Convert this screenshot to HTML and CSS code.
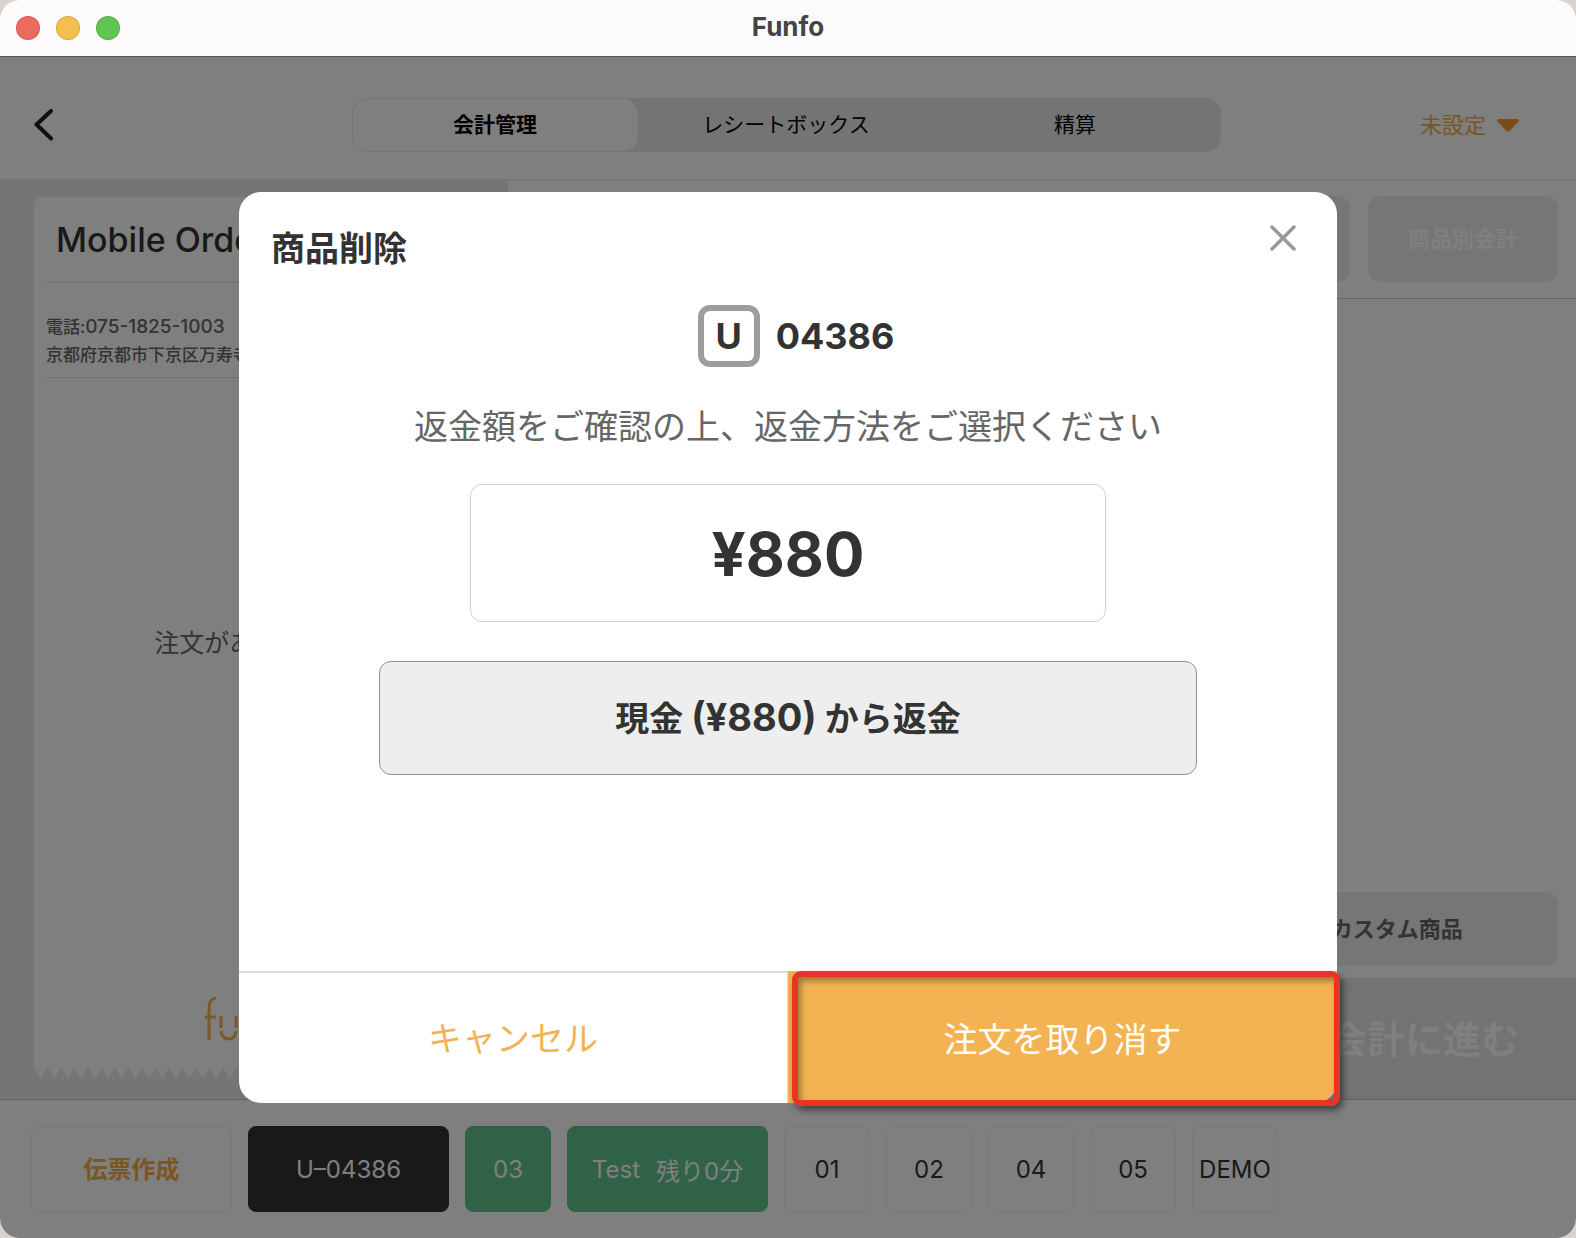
FILE: index.html
```html
<!DOCTYPE html>
<html lang="ja">
<head>
    <meta charset="UTF-8">
    <meta name="viewport" content="width=device-width, initial-scale=1.0">
    <title>Funfo</title>
    <link rel="stylesheet" href="styles.css">
</head>
<body>
    <div class="window">
        <div class="titlebar">
            <div class="lights">
                <span class="light red"></span>
                <span class="light yellow"></span>
                <span class="light green"></span>
            </div>
            <div class="window-title">Funfo</div>
        </div>

        <div class="app">
            <header class="header">
                <button type="button" class="back" aria-label="戻る">
                    <svg width="20" height="32" viewBox="0 0 20 32"><path d="M17 2 L2.500 15.500 L17 29.500" fill="none" stroke="#1c1c28" stroke-width="4" stroke-linecap="round" stroke-linejoin="round"/></svg>
                </button>
                <nav class="tabs">
                    <button type="button" class="tab active">会計管理</button>
                    <button type="button" class="tab">レシートボックス</button>
                    <button type="button" class="tab">精算</button>
                </nav>
                <label class="staff">
                    <select class="staff-select" aria-label="担当者">
                        <option>未設定</option>
                    </select>
                    <svg width="22" height="13" viewBox="0 0 22 13"><path d="M2 0 H20 Q23 .5 21 3 L13 11.500 Q11 13.500 9 11.500 L1 3 Q-1 .5 2 0 Z" fill="#f39a2b"/></svg>
                </label>
            </header>

            <main class="main">
                <section class="receipt-panel">
                    <div class="receipt">
                        <h1 class="shop-name">Mobile Order</h1>
                        <div class="shop-info">
                            <p>電話:<span class="phone">075-1825-1003</span></p>
                            <p>京都府京都市下京区万寿寺町</p>
                        </div>
                        <p class="empty">注文がありません</p>
                        <svg class="logo" width="98" height="46" viewBox="0 0 98 46" fill="none" stroke="#f4b252" stroke-width="3">
                            <path d="M4 44 V12 Q4 3 11 2 M0 21 H11"/>
                            <path d="M16 20 V32 M31 20 V32 M16 35 Q17 43 24 43 Q30 43 31 35"/>
                            <path d="M38 44 V32 M53 44 V32 M38 29 Q39 21 45 21 Q52 21 53 29"/>
                            <path d="M63 44 V12 Q63 3 70 2 M59 21 H70"/>
                            <circle cx="85" cy="32" r="11"/>
                        </svg>
                    </div>
                    <svg class="receipt-edge" width="100%" height="12">
                        <defs>
                            <pattern id="teeth" width="13.500" height="12" patternUnits="userSpaceOnUse">
                                <path d="M0 0 H13.500 L6.750 12 Z" fill="#fff"/>
                            </pattern>
                        </defs>
                        <rect width="100%" height="12" fill="url(#teeth)"/>
                    </svg>
                </section>

                <section class="order-panel">
                    <div class="split-row">
                        <button type="button" class="split">分割会計</button>
                        <button type="button" class="split">商品別会計</button>
                    </div>
                    <div class="order-list"></div>
                    <div class="tools">
                        <button type="button" class="tool">割引</button>
                        <button type="button" class="tool">割増</button>
                        <button type="button" class="tool">カスタム商品</button>
                    </div>
                    <div class="checkout-bar">
                        <button type="button" class="checkout">会計に進む</button>
                    </div>
                </section>
            </main>

            <footer class="slips">
                <button type="button" class="slip wide create">伝票作成</button>
                <button type="button" class="slip wide current">U–04386</button>
                <button type="button" class="slip busy">03</button>
                <button type="button" class="slip wide busy"><span>Test</span><span>残り0分</span></button>
                <button type="button" class="slip">01</button>
                <button type="button" class="slip">02</button>
                <button type="button" class="slip">04</button>
                <button type="button" class="slip">05</button>
                <button type="button" class="slip">DEMO</button>
            </footer>

            <div class="overlay">
                <div class="modal" role="dialog" aria-labelledby="modalTitle">
                    <div class="modal-header">
                        <h2 id="modalTitle" class="modal-title">商品削除</h2>
                        <button type="button" class="close" aria-label="閉じる">
                            <svg width="28" height="28" viewBox="0 0 28 28"><path d="M3 3 L25 25 M25 3 L3 25" stroke="#999" stroke-width="3.500" stroke-linecap="round"/></svg>
                        </button>
                    </div>
                    <div class="modal-body">
                        <div class="order-no">
                            <span class="badge">U</span>
                            <span>04386</span>
                        </div>
                        <p class="message">返金額をご確認の上、返金方法をご選択ください</p>
                        <div class="amount">¥880</div>
                        <button type="button" class="refund">現金 <span class="refund-price">(¥880)</span> から返金</button>
                    </div>
                    <div class="modal-footer">
                        <button type="button" class="cancel">キャンセル</button>
                        <button type="button" class="confirm">注文を取り消す</button>
                    </div>
                    <div class="highlight"></div>
                </div>
            </div>
        </div>
    </div>
</body>
</html>
```

FILE: styles.css
```css
* {
    box-sizing: border-box;
}
body {
    margin: 0;
    background-color: #d9d3cf;
    font-family: Inter, "Noto Sans CJK JP", sans-serif;
    color: #333;
}
h1, h2, p {
    margin: 0;
}
button, select {
    margin: 0;
    padding: 0;
    border: none;
    background: none;
    color: inherit;
    font-family: inherit;
    cursor: pointer;
}
svg {
    display: block;
}

/* window frame */
.window {
    display: flex;
    flex-direction: column;
    min-height: 100vh;
    border-radius: 20px;
    overflow: hidden;
}
.titlebar {
    display: grid;
    grid-template-columns: 1fr auto 1fr;
    align-items: center;
    height: 57px;
    padding: 0 16px;
    background-color: #fcfafb;
    border-bottom: 1px solid #555;
}
.lights {
    display: flex;
    gap: 16px;
}
.light {
    width: 24px;
    height: 24px;
    border-radius: 50%;
    border: 1px solid rgba(0, 0, 0, 0.12);
}
.red {
    background-color: #ed6a5e;
}
.yellow {
    background-color: #f5bf4f;
}
.green {
    background-color: #61c554;
}
.window-title {
    padding-bottom: 2px;
    font-size: 26px;
    font-weight: 700;
    line-height: 32px;
    color: #444;
}

.app {
    position: relative;
    flex: 1;
    display: flex;
    flex-direction: column;
    background-color: #fff;
}

/* header */
.header {
    display: grid;
    grid-template-columns: 1fr auto 1fr;
    align-items: center;
    height: 124px;
    padding: 14px 24px 0 20px;
    border-bottom: 2px solid #ebebeb;
}
.back {
    justify-self: start;
    padding: 12px 14px;
}
.tabs {
    display: grid;
    grid-template-columns: repeat(3, 289px);
    height: 54px;
    padding: 1px;
    border-radius: 16px;
    background-color: #e9e9e9;
}
.tab {
    font-size: 21px;
    line-height: 32px;
    color: #000;
    border-radius: 15px;
}
.tab.active {
    font-weight: 700;
    margin-right: 4px;
    background-color: #fff;
}
.staff {
    display: flex;
    justify-self: end;
    align-items: center;
    gap: 10px;
    padding-right: 33px;
}
.staff-select {
    appearance: none;
    font-size: 22px;
    line-height: 32px;
    color: #f4ac45;
}

/* main area */
.main {
    flex: 1;
    display: flex;
}
.receipt-panel {
    display: flex;
    flex-direction: column;
    width: 508px;
    padding: 16px 34px 20px;
    background-color: #ebebeb;
}
.receipt {
    flex: 1;
    display: flex;
    flex-direction: column;
    padding: 0 12px;
    border-radius: 8px 8px 0 0;
    background-color: #fff;
}
.shop-name {
    height: 86px;
    padding-left: 10px;
    border-bottom: 1px solid #e0e0e0;
    font-size: 34px;
    font-weight: 500;
    line-height: 86px;
}
.shop-info {
    padding: 30px 0 8px;
    border-bottom: 1px solid #e0e0e0;
    font-size: 17px;
    font-weight: 500;
    line-height: 28px;
    color: #666;
    white-space: nowrap;
}
.phone {
    font-size: 19px;
}
.empty {
    flex: 1;
    display: flex;
    align-items: center;
    justify-content: center;
    padding-bottom: 92px;
    font-size: 25px;
    color: #666;
}
.logo {
    align-self: center;
    margin-bottom: 25px;
}

.order-panel {
    flex: 1;
    display: flex;
    flex-direction: column;
}
.split-row {
    display: flex;
    justify-content: flex-end;
    gap: 18px;
    padding: 15px 18px 16px;
    border-bottom: 1px solid #c8c8c8;
}
.split {
    width: 190px;
    height: 86px;
    padding-bottom: 4px;
    border-radius: 12px;
    background-color: #ececec;
    font-size: 22px;
    font-weight: 700;
    color: #fff;
}
.order-list {
    flex: 1;
}
.tools {
    display: grid;
    grid-template-columns: repeat(3, 1fr);
    gap: 32px;
    padding: 12px 18px;
}
.tool {
    height: 74px;
    padding-bottom: 4px;
    border-radius: 12px;
    background-color: #ececec;
    font-size: 22px;
    font-weight: 700;
    color: #666;
}
.checkout-bar {
    display: flex;
    justify-content: flex-end;
    height: 121px;
    background-color: #e6e6e6;
}
.checkout {
    width: 304px;
    padding-bottom: 4px;
    font-size: 38px;
    font-weight: 700;
    color: #fff;
}

/* slips at the bottom */
.slips {
    display: flex;
    gap: 16px;
    height: 139px;
    padding: 26px 31px;
    border-top: 1px solid #c8c8c8;
}
.slip {
    width: 86px;
    height: 86px;
    border: 1px solid #f0f0f0;
    border-radius: 8px;
    font-size: 24px;
    white-space: nowrap;
}
.slip.wide {
    width: 201px;
}
.slip.create {
    padding-bottom: 4px;
    font-weight: 700;
    color: #f4ac45;
}
.slip.current {
    background-color: #333;
    border-color: #333;
    color: #fff;
}
.slip.busy {
    display: flex;
    align-items: center;
    justify-content: center;
    gap: 16px;
    background-color: #5fc58e;
    border-color: #5fc58e;
    color: #fff;
}

/* dialog */
.overlay {
    position: absolute;
    inset: 0;
    display: flex;
    align-items: center;
    justify-content: center;
    background-color: rgba(0, 0, 0, 0.5);
}
.modal {
    position: relative;
    display: flex;
    flex-direction: column;
    width: 100%;
    max-width: 1098px;
    border-radius: 22px;
    background-color: #fff;
}
.modal-header {
    display: flex;
    align-items: flex-start;
    justify-content: space-between;
    padding: 32px 40px 0 32px;
}
.modal-title {
    font-size: 34px;
    font-weight: 700;
    line-height: 50px;
}
.modal-body {
    display: flex;
    flex-direction: column;
    align-items: center;
    padding: 31px 140px 196px;
}
.order-no {
    display: flex;
    align-items: center;
    gap: 16px;
    padding-left: 16px;
    font-size: 36px;
    font-weight: 700;
}
.badge {
    width: 62px;
    height: 62px;
    border: 6px solid #9d9d9d;
    border-radius: 12px;
    line-height: 50px;
    text-align: center;
}
.message {
    margin-top: 35px;
    font-size: 34px;
    line-height: 50px;
    color: #666;
}
.amount {
    width: 636px;
    height: 138px;
    margin-top: 32px;
    border: 1px solid #d0d0d0;
    border-radius: 12px;
    font-size: 60px;
    font-weight: 700;
    line-height: 138px;
    text-align: center;
}
.refund {
    width: 100%;
    height: 114px;
    margin-top: 39px;
    padding-bottom: 4px;
    border: 1px solid #909090;
    border-radius: 12px;
    background-color: #eee;
    font-size: 34px;
    font-weight: 700;
}
.refund-price {
    font-size: 38px;
}
.modal-footer {
    display: grid;
    grid-template-columns: 1fr 1fr;
    height: 132px;
    border-top: 2px solid #ddd;
}
.cancel {
    padding-bottom: 4px;
    border-right: 1px solid #ddd;
    font-size: 34px;
    color: #f4b353;
}
.confirm {
    margin-top: -2px;
    border-bottom-right-radius: 22px;
    background-color: #f4b353;
    font-size: 34px;
    color: #fff;
}
/* red frame round the confirm button */
.highlight {
    position: absolute;
    right: -3px;
    bottom: -3px;
    width: 548px;
    height: 135px;
    border: 6px solid #ea3423;
    border-radius: 9px;
    box-shadow: 3px 4px 7px rgba(0, 0, 0, 0.5), inset 3px 4px 6px rgba(0, 0, 0, 0.35);
    pointer-events: none;
}
```
